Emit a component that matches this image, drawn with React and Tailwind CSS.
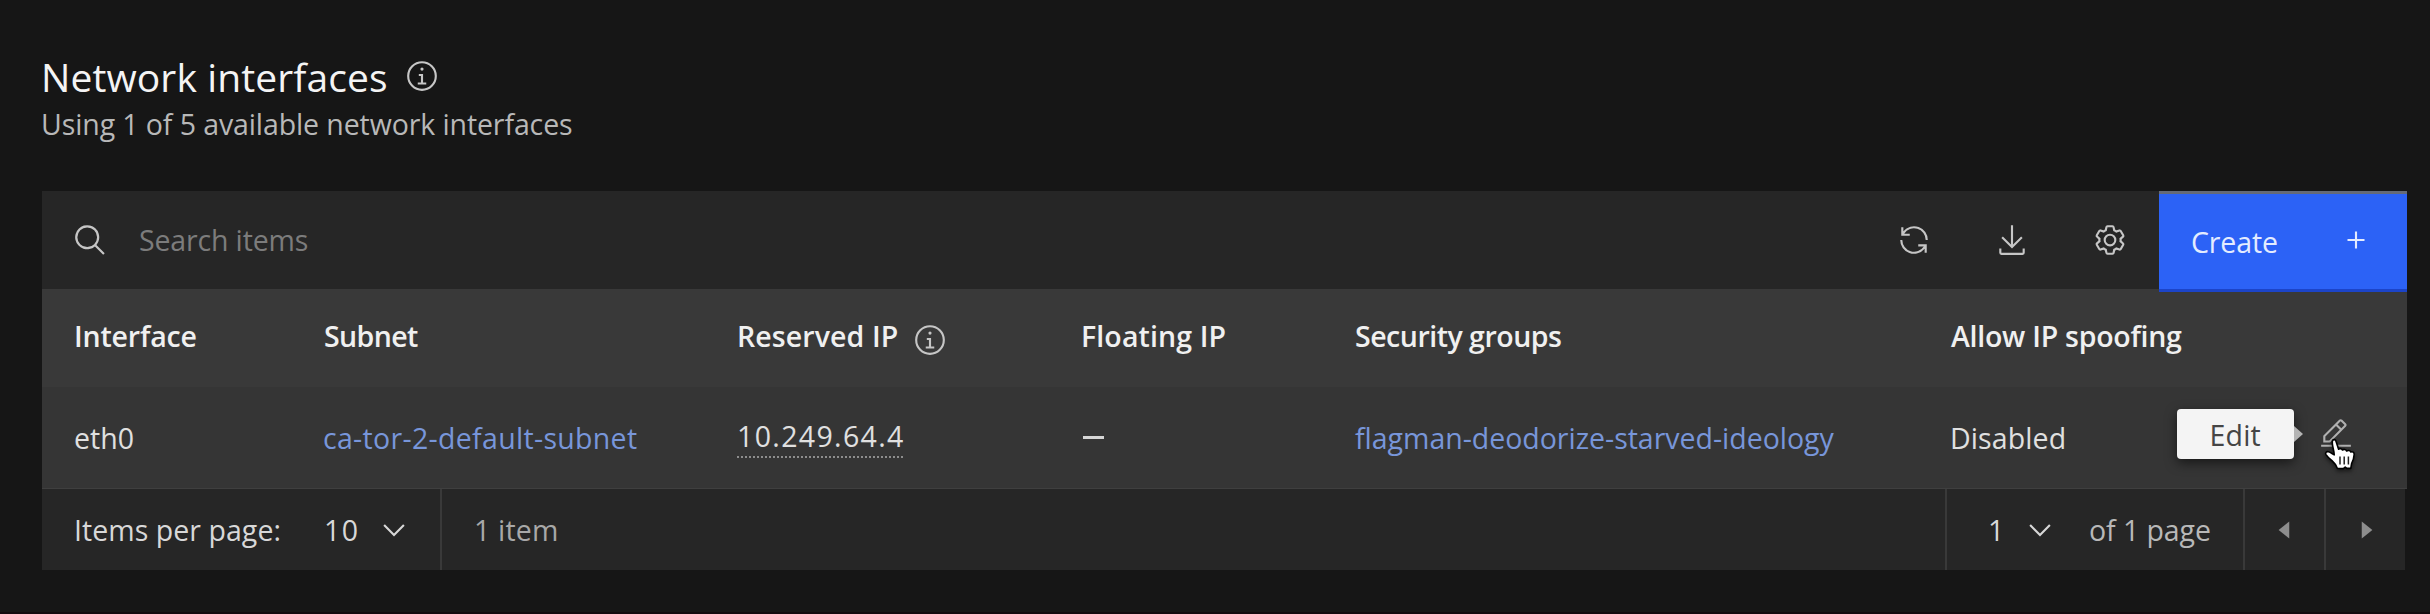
import clsx from "clsx";

const ICONS = {
  search: "M29,27.5859l-7.5521-7.5521a11.0177,11.0177,0,1,0-1.4141,1.4141L27.5859,29ZM4,13a9,9,0,1,1,9,9A9.01,9.01,0,0,1,4,13Z",
  info: "M17 22 17 14 13 14 13 16 15 16 15 22 12 22 12 24 20 24 20 22 17 22zM16,8a1.5,1.5,0,1,0,1.5,1.5A1.5,1.5,0,0,0,16,8zM16,30A14,14,0,1,1,30,16,14,14,0,0,1,16,30ZM16,4A12,12,0,1,0,28,16,12,12,0,0,0,16,4Z",
  renew: "M12,10H6.78A11,11,0,0,1,27,16h2A13,13,0,0,0,6,7.68V4H4v8h8ZM20,22h5.22A11,11,0,0,1,5,16H3a13,13,0,0,0,23,8.32V28h2V20H20Z",
  download: "M26,24v4H6V24H4v4a2,2,0,0,0,2,2H26a2,2,0,0,0,2-2V24ZM26 14 24.59 12.59 17 20.17 17 2 15 2 15 20.17 7.41 12.59 6 14 16 24 26 14Z",
  settings: "M27,16.76c0-.25,0-.5,0-.76s0-.51,0-.77l1.92-1.68A2,2,0,0,0,29.3,11L26.94,7a2,2,0,0,0-1.73-1,2,2,0,0,0-.64.1l-2.43.82a11.35,11.35,0,0,0-1.31-.75l-.51-2.52a2,2,0,0,0-2-1.61H13.64a2,2,0,0,0-2,1.61l-.51,2.52a11.48,11.48,0,0,0-1.32.75L7.43,6.06A2,2,0,0,0,6.79,6,2,2,0,0,0,5.06,7L2.7,11a2,2,0,0,0,.41,2.51L5,15.24c0,.25,0,.5,0,.76s0,.51,0,.77L3.11,18.45A2,2,0,0,0,2.7,21L5.06,25a2,2,0,0,0,1.73,1,2,2,0,0,0,.64-.1l2.43-.82a11.35,11.35,0,0,0,1.31.75l.51,2.52a2,2,0,0,0,2,1.61h4.72a2,2,0,0,0,2-1.61l.51-2.52a11.48,11.48,0,0,0,1.32-.75l2.42.82a2,2,0,0,0,.64.1,2,2,0,0,0,1.73-1L29.3,21a2,2,0,0,0-.41-2.51ZM25.21,24l-3.43-1.16a8.86,8.86,0,0,1-2.71,1.57L18.36,28H13.64l-.71-3.55a9.36,9.36,0,0,1-2.7-1.57L6.79,24,4.43,20l2.72-2.4a8.9,8.9,0,0,1,0-3.13L4.43,12,6.79,8l3.43,1.16a8.86,8.86,0,0,1,2.71-1.57L13.64,4h4.72l.71,3.55a9.36,9.36,0,0,1,2.7,1.57L25.21,8,27.57,12l-2.72,2.4a8.9,8.9,0,0,1,0,3.13L27.57,20ZM16,22a6,6,0,1,1,6-6A5.94,5.94,0,0,1,16,22Zm0-10a3.91,3.91,0,0,0-4,4,3.91,3.91,0,0,0,4,4,3.91,3.91,0,0,0,4-4A3.91,3.91,0,0,0,16,12Z",
  add: "M17 15 17 8 15 8 15 15 8 15 8 17 15 17 15 24 17 24 17 17 24 17 24 15z",
  chevron: "M16 22 6 12 7.4 10.6 16 19.2 24.6 10.6 26 12z",
  edit: "M2 26H30V28H2zM25.4 9c.8-.8.8-2 0-2.8l-3.6-3.6c-.8-.8-2-.8-2.8 0l-15 15V24h6.4L25.4 9zM20.4 4L24 7.6l-3 3L17.4 7 20.4 4zM6 22v-3.6l10-10 3.6 3.6-10 10H6z",
  caretLeft: "M20 24 10 16 20 8z",
  caretRight: "M12 8 22 16 12 24z",
};

function Icon({ name, className }) {
  return (
    <svg viewBox="0 0 32 32" fill="currentColor" className={clsx("shrink-0", className)}>
      <path fillRule={name === "edit" ? "evenodd" : "nonzero"} d={ICONS[name]} />
    </svg>
  );
}

function HandCursor() {
  return (
    <svg viewBox="0 0 34 36" className="absolute left-[372px] top-[49px] h-[36px] w-[34px] drop-shadow-[0_2px_2px_rgba(0,0,0,0.55)]">
      <path
        d="M9.5 4.5C10.5 3 12.5 3.4 13 5.2L15.6 13.2C17 12.2 18.8 12.6 19.4 14C20.8 12.9 23 13.4 23.6 15C25 14 27.2 14.4 27.8 16C29.4 15.2 31.4 16.2 31.2 18.4C31 22 30 25 28.6 27.6L27.8 32.4L23.8 32.4L22.2 31L20.4 32.6L14.4 32.4C13.6 29.4 11.6 27.2 9.4 25.2C7 23 4.6 21 3 18.6C1.8 16.6 3.6 15.2 5.6 15.8C7.6 16.4 9.2 17.8 11.2 18.8C11.2 14 8.4 8.6 9.5 4.5Z"
        fill="#fff"
        stroke="#000"
        strokeWidth="1.6"
        strokeLinejoin="round"
      />
      <path d="M17 20.5V28.5M21.2 20.5V28.5M25.4 20.5V28.5" stroke="#222" strokeWidth="1.5" fill="none" />
    </svg>
  );
}

const COLS = "grid grid-cols-[249px_414px_345px_273px_595px_1fr] pl-[33px]";

export default function App() {
  return (
    <main className="flex h-[614px] w-[2430px] flex-col overflow-hidden whitespace-nowrap border-b-2 border-[#120a0e] bg-[#161616] pl-[42px] pr-[23px] pt-[53px] font-['Open_Sans',sans-serif] text-[28.5px] leading-10 text-[#e0e0e0]">
      <header className="flex flex-col gap-[3px]">
        <h1 className="flex h-12 items-center text-[39px] leading-[48px] tracking-[0.1px] text-[#f4f4f4]">
          <span className="-ml-px w-[364px]">Network interfaces</span>
          <Icon name="info" className="-mt-0.5 size-[34px] text-[#c6c6c6]" />
        </h1>
        <p className="-ml-px tracking-[-0.1px] text-[#b8b8b8]">Using 1 of 5 available network interfaces</p>
      </header>

      <section className="mt-[47px]">
        <div className="flex h-[98px] items-center bg-[#262626] pl-[31px]">
          <Icon name="search" className="size-[35px] text-[#c6c6c6]" />
          <span className="ml-[31px] grow tracking-[-0.15px] text-[#7c7c7c]">Search items</span>
          <div className="flex items-center gap-[64px] pr-[32px] text-[#c6c6c6]">
            <Icon name="renew" className="size-[34px]" />
            <Icon name="download" className="size-[34px]" />
            <Icon name="settings" className="size-[34px]" />
          </div>
          <button className="-mb-[3px] flex h-[101px] w-[248px] items-center justify-between border-b-[3px] border-t-[3px] border-b-[#1c44c8] border-t-[#656a78] bg-[#2c62f6] pl-8 pr-[34px] text-[#e4ecff]">
            <span className="tracking-[-0.12px]">Create</span>
            <Icon name="add" className="-mt-[3px] size-[34px]" />
          </button>
        </div>

        <div className={clsx(COLS, "h-[98px] items-center bg-[#393939] pb-1 font-semibold text-[#f0f0f0]")}>
          <span className="-ml-px tracking-[-0.16px]">Interface</span>
          <span className="tracking-[-0.61px]">Subnet</span>
          <span className="-ml-px flex items-center">
            <span className="w-[176px] tracking-[0.1px]">Reserved IP</span>
            <Icon name="info" className="mt-[7px] size-[34px] text-[#c6c6c6]" />
          </span>
          <span className="-ml-0.5 tracking-[0.12px]">Floating IP</span>
          <span className="-ml-px tracking-[-0.49px]">Security groups</span>
          <span className="tracking-[-0.26px]">Allow IP spoofing</span>
        </div>

        <div className={clsx(COLS, "h-[102px] items-center border-b border-[#3f3f3f] bg-[#353535]")}>
          <span className="-ml-px tracking-[0.05px]">eth0</span>
          <a className="-ml-px tracking-[0.31px] text-[#7896da]">ca-tor-2-default-subnet</a>
          <span className="-ml-px -mt-px h-[42px] w-[166px] border-b-2 border-dotted border-[#8d8d8d] leading-[40px] tracking-[1.35px]">10.249.64.4</span>
          <span className="h-[3px] w-[21px] bg-[#d6d6d6]" role="img" aria-label="None" />
          <a className="-ml-px tracking-[-0.02px] text-[#7896da]">flagman-deodorize-starved-ideology</a>
          <div className="relative flex h-full items-center">
            <span className="-ml-px w-[114px] tracking-[0.1px]">Disabled</span>
            <div className="absolute left-[226px] top-[22px] flex h-[50px] w-[116.5px] items-center justify-center rounded bg-[#f4f4f4] pt-0.5 tracking-[0.18px] text-[#454545] shadow-[0_4px_12px_rgba(0,0,0,0.55)]">
              Edit
              <svg viewBox="0 0 10 16" className="absolute left-full top-[17px] h-4 w-2.5">
                <path d="M0 0 9 8 0 16z" fill="#b4b4b4" />
              </svg>
            </div>
            <Icon name="edit" className="-mt-[7px] ml-[255px] size-[34px] text-[#b0b0b0]" />
            <HandCursor />
          </div>
        </div>

        <footer className="mr-0.5 flex h-[81px] bg-[#262626] text-[#d8d8d8]">
          <div className="flex w-[400px] items-center border-r-2 border-[#393939] pl-8">
            <span className="w-[250px] tracking-[0.05px]">Items per page:</span>
            <span className="w-[53px] tracking-[1.5px]">10</span>
            <Icon name="chevron" className="size-[34px]" />
          </div>
          <span className="grow self-center pl-8 tracking-[0.19px] text-[#a8a8a8]">1 item</span>
          <div className="flex w-[298px] items-center border-l-2 border-[#393939] pl-[41px]">
            <span className="w-[35px]">1</span>
            <Icon name="chevron" className="size-[34px]" />
            <span className="ml-[32px] tracking-[-0.07px] text-[#b8b8b8]">of 1 page</span>
          </div>
          <div className="flex w-[81px] items-center justify-center border-l-2 border-[#393939] text-[#8d8d8d]">
            <Icon name="caretLeft" className="size-[34px]" />
          </div>
          <div className="flex w-[81px] items-center justify-center border-l-2 border-[#393939] text-[#8d8d8d]">
            <Icon name="caretRight" className="size-[34px]" />
          </div>
        </footer>
      </section>
    </main>
  );
}
